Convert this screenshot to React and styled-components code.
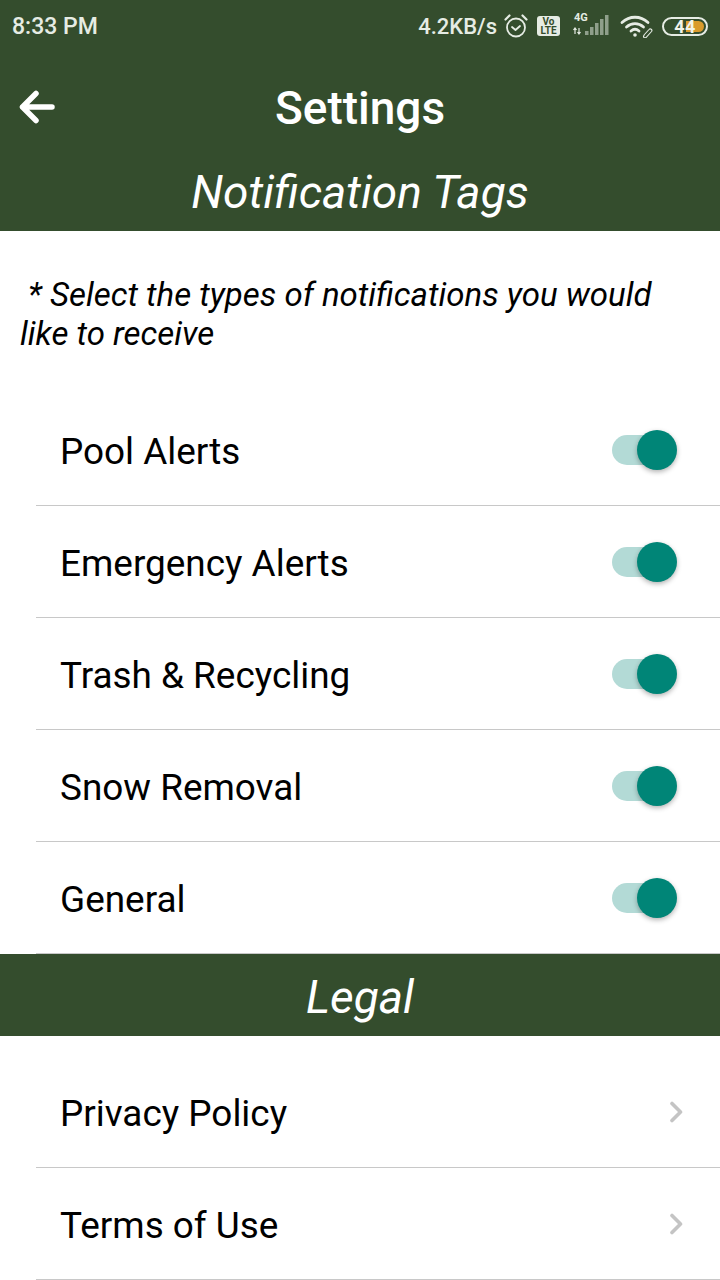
import React from "react";
import styled, { createGlobalStyle } from "styled-components";

const tags = ["Pool Alerts", "Emergency Alerts", "Trash & Recycling", "Snow Removal", "General"];
const legal = ["Privacy Policy", "Terms of Use"];

const Alarm = () => (
  <svg width="26" height="26" viewBox="0 0 26 26" fill="none" stroke="#e6ece4" strokeWidth="1.8" strokeLinecap="round" strokeLinejoin="round">
    <circle cx="13" cy="14.5" r="9" />
    <path d="M9 14l3.5 3 4.5-4" />
    <path d="M2.5 6.5L6.5 2.5M23.5 6.5L19.5 2.5" strokeWidth="2.2" />
  </svg>
);

const Volte = () => (
  <VolteBox>
    <span>Vo</span>
    <span>LTE</span>
  </VolteBox>
);

const Signal = () => (
  <SignalWrap>
    <NetworkType>4G</NetworkType>
    <svg width="42" height="28" viewBox="0 0 42 28">
      <path d="M3 16v6M7 16v6M1.500 18l1.500-2 1.500 2M5.500 20l1.500 2 1.500-2" stroke="#e6ece4" strokeWidth="1.2" fill="none" />
      <g fill="#8f9f8b">
        <rect x="13" y="19" width="3.500" height="4" />
        <rect x="18" y="15" width="3.500" height="8" />
        <rect x="23" y="11" width="3.500" height="12" />
        <rect x="28" y="7" width="3.500" height="16" />
        <rect x="33" y="3" width="3.500" height="20" />
      </g>
    </svg>
  </SignalWrap>
);

const Wifi = () => (
  <svg width="34" height="24" viewBox="0 0 34 24" fill="none" stroke="#e6ece4" strokeLinecap="round">
    <path d="M2 8.500C9.500 1.500 20.500 1.500 28 8.500" strokeWidth="2.8" />
    <path d="M6.500 13C11.500 8.500 18.500 8.500 23.500 13" strokeWidth="2.8" />
    <path d="M11 17C13.500 14.800 16.500 14.800 19 17" strokeWidth="2.8" />
    <circle cx="15" cy="21" r="1.800" fill="#e6ece4" stroke="none" />
    <path d="M24 21l5-5.500a1.500 1.500 0 0 1 2.500 2l-5.500 6a1.400 1.400 0 0 1-2-2" strokeWidth="1.100" />
  </svg>
);

const Back = () => (
  <svg width="38" height="36" viewBox="0 0 38 36" fill="none" stroke="#fff" strokeWidth="5.500" strokeLinecap="round" strokeLinejoin="round">
    <path d="M34 18H4.500M18 4.500L4.500 18 18 31.500" />
  </svg>
);

const Chevron = () => (
  <svg width="15" height="22" viewBox="0 0 15 22" fill="none" stroke="#c4c4c4" strokeWidth="3.600" strokeLinecap="round" strokeLinejoin="round">
    <path d="M3 2.500l8.500 8.500-8.500 8.500" />
  </svg>
);

const App = () => (
  <>
    <Global />
    <Page>
      <Top>
        <StatusBar>
          <Clock>8:33 PM</Clock>
          <StatusIcons>
            <Speed>4.2KB/s</Speed>
            <Alarm />
            <Volte />
            <Signal />
            <Wifi />
            <Battery>
              <BatteryFill />
              <BatteryText>44</BatteryText>
            </Battery>
          </StatusIcons>
        </StatusBar>
        <NavBar>
          <BackButton>
            <Back />
          </BackButton>
          <Title>Settings</Title>
        </NavBar>
        <SectionTitle>Notification Tags</SectionTitle>
      </Top>
      <Note>&nbsp;* Select the types of notifications you would like to receive</Note>
      <List>
        {tags.map((tag) => (
          <Row key={tag}>
            <Label>{tag}</Label>
            <Toggle>
              <Track />
              <Knob />
            </Toggle>
          </Row>
        ))}
      </List>
      <LegalBar>Legal</LegalBar>
      <LegalList>
        {legal.map((item) => (
          <Row key={item}>
            <Label>{item}</Label>
            <ChevronWrap>
              <Chevron />
            </ChevronWrap>
          </Row>
        ))}
      </LegalList>
    </Page>
  </>
);

const Global = createGlobalStyle`
  html, body {
    margin: 0;
    padding: 0;
    background: #fff;
  }
  body {
    font-family: Roboto, "Liberation Sans", sans-serif;
  }
`;

const Page = styled.div`
  width: 720px;
  height: 1280px;
  overflow: hidden;
  background: #fff;
`;

const Top = styled.div`
  background: #344d2d;
  height: 231px;
`;

const StatusBar = styled.div`
  height: 52px;
  display: flex;
  align-items: center;
  justify-content: space-between;
  padding: 0 12px;
  color: #e6ece4;
`;

const Clock = styled.div`
  font-size: 23px;
  font-weight: 500;
`;

const StatusIcons = styled.div`
  display: flex;
  align-items: center;
  gap: 6px;
`;

const Speed = styled.div`
  font-size: 22px;
  font-weight: 500;
`;

const VolteBox = styled.div`
  width: 23px;
  height: 20px;
  margin: 0 6px 0 2px;
  background: #e6ece4;
  border-radius: 3px;
  color: #344d2d;
  font-size: 10px;
  line-height: 9px;
  font-weight: 700;
  display: flex;
  flex-direction: column;
  align-items: center;
  justify-content: center;
`;

const SignalWrap = styled.div`
  position: relative;
  display: flex;
  width: 42px;
  height: 28px;
`;

const NetworkType = styled.span`
  position: absolute;
  left: 2px;
  top: 0;
  font-size: 11px;
  line-height: 11px;
  font-weight: 700;
  color: #e6ece4;
`;

const Battery = styled.div`
  position: relative;
  width: 46px;
  height: 19px;
  margin-left: 2px;
  border: 2px solid #e6ece4;
  border-radius: 10px;
  box-sizing: border-box;
  display: flex;
  align-items: center;
  justify-content: center;
  overflow: hidden;
`;

const BatteryFill = styled.div`
  position: absolute;
  top: 2px;
  bottom: 2px;
  left: 22px;
  width: 18px;
  border-radius: 0 8px 8px 0;
  background: #d99a2b;
`;

const BatteryText = styled.span`
  position: relative;
  font-size: 18px;
  line-height: 15px;
  font-weight: 700;
  letter-spacing: 0.5px;
  color: #f1f3ea;
`;

const NavBar = styled.div`
  position: relative;
  height: 112px;
  display: flex;
  align-items: center;
  justify-content: center;
`;

const BackButton = styled.div`
  position: absolute;
  left: 18px;
  top: 37px;
  display: flex;
`;

const Title = styled.h1`
  margin: 0;
  font-size: 46px;
  font-weight: 500;
  color: #fff;
`;

const SectionTitle = styled.div`
  text-align: center;
  font-size: 46px;
  font-style: italic;
  line-height: 56px;
  color: #fff;
`;

const Note = styled.p`
  margin: 0;
  padding: 44px 20px 0;
  height: 119px;
  box-sizing: border-box;
  font-size: 33px;
  font-style: italic;
  line-height: 39px;
  color: #000;
`;

const List = styled.div`
  padding-left: 36px;
  margin-top: 44px;
`;

const LegalList = styled(List)`
  margin-top: 20px;
`;

const Row = styled.div`
  height: 112px;
  box-sizing: border-box;
  display: flex;
  align-items: center;
  justify-content: space-between;
  padding: 4px 43px 0 24px;
  border-bottom: 1px solid #c8c8c8;
`;

const Label = styled.div`
  font-size: 36.9px;
  color: #000;
`;

const Toggle = styled.div`
  position: relative;
  width: 65px;
  height: 40px;
  margin-top: -4px;
`;

const Track = styled.div`
  position: absolute;
  left: 0;
  top: 5px;
  width: 60px;
  height: 30px;
  border-radius: 15px;
  background: #b3dad6;
`;

const Knob = styled.div`
  position: absolute;
  right: 0;
  top: 0;
  width: 40px;
  height: 40px;
  border-radius: 50%;
  background: #008577;
  box-shadow: 0 2px 5px rgba(0, 0, 0, 0.3);
`;

const ChevronWrap = styled.div`
  display: flex;
  margin: -3px -7px 0 0;
`;

const LegalBar = styled.div`
  height: 82px;
  background: #344d2d;
  color: #fff;
  text-align: center;
  font-size: 46px;
  font-style: italic;
  line-height: 86px;
`;

export default App;
